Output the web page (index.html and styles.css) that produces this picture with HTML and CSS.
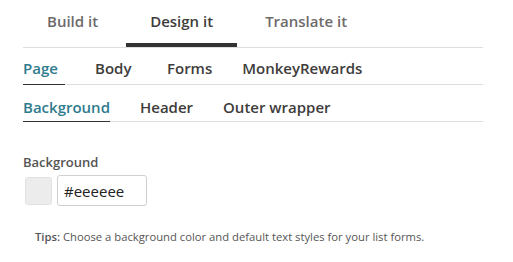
FILE: index.html
```html
<!DOCTYPE html>
<html>
<head>
<meta charset="utf-8">
<link rel="stylesheet" href="styles.css">
</head>
<body>
<div class="panel">
  <nav class="main-tabs">
    <a class="main-tab">Build it</a>
    <a class="main-tab active">Design it</a>
    <a class="main-tab">Translate it</a>
  </nav>
  <nav class="sub-tabs">
    <a class="sub-tab active">Page</a>
    <a class="sub-tab">Body</a>
    <a class="sub-tab">Forms</a>
    <a class="sub-tab">MonkeyRewards</a>
  </nav>
  <nav class="sub-tabs third">
    <a class="sub-tab active">Background</a>
    <a class="sub-tab">Header</a>
    <a class="sub-tab">Outer wrapper</a>
  </nav>
  <div class="field">
    <label class="field-label">Background</label>
    <div class="color-row">
      <span class="swatch"></span>
      <input class="color-input" type="text" value="#eeeeee">
    </div>
  </div>
  <p class="tips"><strong>Tips:</strong> Choose a background color and default text styles for your list forms.</p>
</div>
</body>
</html>
```
FILE: styles.css
```css
html, body {
  margin: 0;
  padding: 0;
  background: #fff;
}
body {
  font-family: "Open Sans", "Noto Sans", sans-serif;
  color: #403c3c;
}
.panel {
  width: 460px;
  margin-left: 23px;
}
.main-tabs {
  display: flex;
  gap: 4px;
  border-bottom: 1px solid #dedede;
  height: 47px;
}
.main-tab {
  padding: 10px 24px 0;
  font-size: 15px;
  font-weight: 600;
  line-height: 22px;
  color: #6d6a6a;
  border-bottom: 4px solid transparent;
  box-sizing: border-box;
  height: 47px;
}
.main-tab.active {
  color: #403c3c;
  border-bottom-color: #333;
}
.sub-tabs {
  display: flex;
  gap: 30px;
  border-bottom: 1px solid #dedede;
  height: 37px;
  box-sizing: border-box;
}
.sub-tab {
  min-width: 42px;
  font-size: 15px;
  font-weight: 600;
  line-height: 22px;
  padding-top: 9px;
  color: #403c3c;
  box-sizing: border-box;
  height: 37px;
}
.sub-tab.active {
  color: #2f7b8e;
  border-bottom: 1px solid #333;
}
.third {
  height: 37px;
}
.third .sub-tab {
  padding-top: 11px;
}
.field {
  padding-top: 31px;
}
.field-label {
  display: block;
  font-size: 13px;
  font-weight: 600;
  color: #555;
  line-height: 18px;
}
.color-row {
  display: flex;
  align-items: center;
  gap: 5px;
  margin-top: 4px;
  padding-left: 2px;
}
.swatch {
  width: 27px;
  height: 28px;
  background: #ececec;
  border: 1px solid #e2e2e2;
  border-radius: 3px;
  box-sizing: border-box;
}
.color-input {
  width: 90px;
  height: 31px;
  box-sizing: border-box;
  border: 1px solid #cfcfcf;
  border-radius: 3px;
  padding: 0 6px;
  font-family: "Open Sans", "Noto Sans", sans-serif;
  font-size: 15px;
  color: #222;
  margin: 0;
}
.tips {
  margin: 23px 0 0 12px;
  font-size: 11.25px;
  color: #555;
  line-height: 15px;
}
.tips strong {
  font-weight: 600;
}
```
